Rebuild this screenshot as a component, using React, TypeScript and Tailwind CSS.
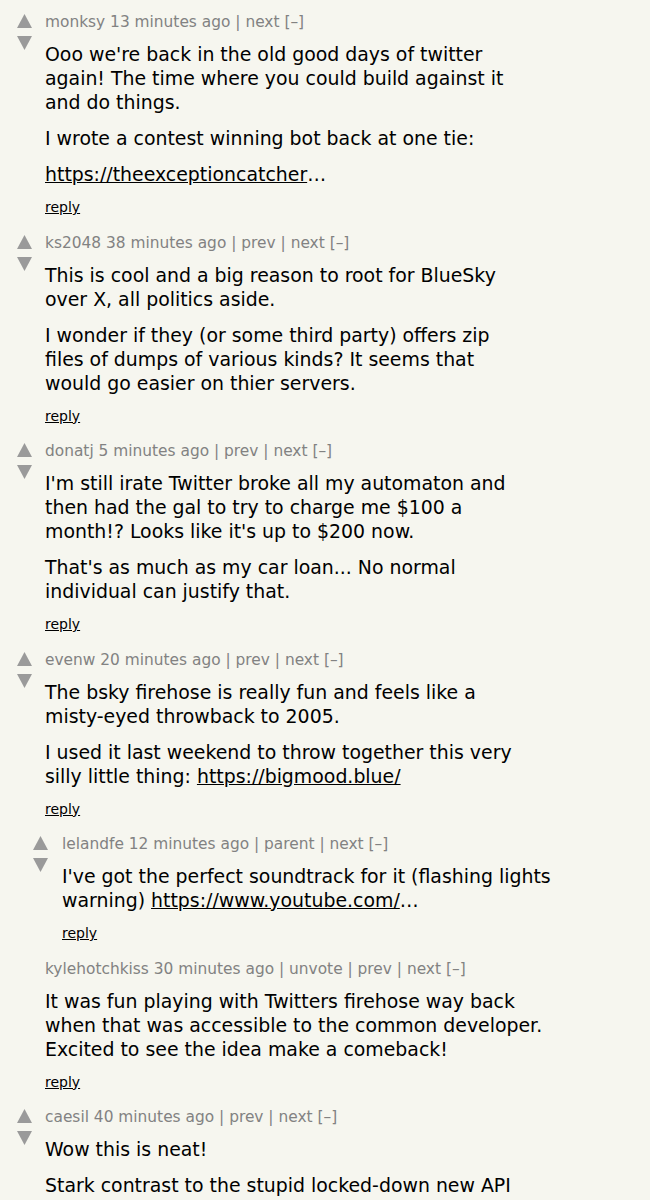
import React from "react";

type Part = string | { link: string; tail?: string };
type Line = Part[];
type Comment = {
  user: string;
  age: string;
  links: string[];
  arrows: boolean;
  nested?: boolean;
  paras: Line[][];
};

const comments: Comment[] = [
  {
    user: "monksy",
    age: "13 minutes ago",
    links: ["next"],
    arrows: true,
    paras: [
      [
        ["Ooo we're back in the old good days of twitter"],
        ["again! The time where you could build against it"],
        ["and do things."],
      ],
      [["I wrote a contest winning bot back at one tie:"]],
      [[{ link: "https://theexceptioncatcher", tail: "…" }]],
    ],
  },
  {
    user: "ks2048",
    age: "38 minutes ago",
    links: ["prev", "next"],
    arrows: true,
    paras: [
      [["This is cool and a big reason to root for BlueSky"], ["over X, all politics aside."]],
      [
        ["I wonder if they (or some third party) offers zip"],
        ["files of dumps of various kinds? It seems that"],
        ["would go easier on thier servers."],
      ],
    ],
  },
  {
    user: "donatj",
    age: "5 minutes ago",
    links: ["prev", "next"],
    arrows: true,
    paras: [
      [
        ["I'm still irate Twitter broke all my automaton and"],
        ["then had the gal to try to charge me $100 a"],
        ["month!? Looks like it's up to $200 now."],
      ],
      [["That's as much as my car loan... No normal"], ["individual can justify that."]],
    ],
  },
  {
    user: "evenw",
    age: "20 minutes ago",
    links: ["prev", "next"],
    arrows: true,
    paras: [
      [["The bsky firehose is really fun and feels like a"], ["misty-eyed throwback to 2005."]],
      [
        ["I used it last weekend to throw together this very"],
        ["silly little thing: ", { link: "https://bigmood.blue/" }],
      ],
    ],
  },
  {
    user: "lelandfe",
    age: "12 minutes ago",
    links: ["parent", "next"],
    arrows: true,
    nested: true,
    paras: [
      [
        ["I've got the perfect soundtrack for it (flashing lights"],
        ["warning) ", { link: "https://www.youtube.com/", tail: "…" }],
      ],
    ],
  },
  {
    user: "kylehotchkiss",
    age: "30 minutes ago",
    links: ["unvote", "prev", "next"],
    arrows: false,
    paras: [
      [
        ["It was fun playing with Twitters firehose way back"],
        ["when that was accessible to the common developer."],
        ["Excited to see the idea make a comeback!"],
      ],
    ],
  },
  {
    user: "caesil",
    age: "40 minutes ago",
    links: ["prev", "next"],
    arrows: true,
    paras: [
      [["Wow this is neat!"]],
      [["Stark contrast to the stupid locked-down new API"], ["that Twitter offers these days."]],
    ],
  },
];

const UpArrow = () => (
  <svg width="15" height="14" viewBox="0 0 15 14" className="block">
    <polygon points="7.5,0 15,14 0,14" fill="#9a9a9a" />
  </svg>
);
const DownArrow = () => (
  <svg width="15" height="14" viewBox="0 0 15 14" className="block">
    <polygon points="0,0 15,0 7.5,14" fill="#9a9a9a" />
  </svg>
);

function CommentView({ c }: { c: Comment }) {
  return (
    <div className={c.nested ? "flex pl-[33px] mb-[16.5px]" : "flex pl-[17px] mb-[16.5px]"}>
      <div className="w-[15px] shrink-0 flex flex-col pt-[2px] gap-[8px]">
        {c.arrows && (
          <>
            <UpArrow />
            <DownArrow />
          </>
        )}
      </div>
      <div className={c.nested ? "ml-[14px] flex-1 pr-[40px]" : "ml-[13px] flex-1 pr-[40px]"}>
        <div className="text-[15.4px] leading-[20px] text-[#828282]">
          {c.user} {c.age}
          {c.links.map((l) => (
            <span key={l}> | {l}</span>
          ))}{" "}
          [–]
        </div>
        <div className="mt-[10px] text-[18.9px] leading-[24px] text-black whitespace-nowrap">
          {c.paras.map((p, i) => (
            <p key={i} className={i > 0 ? "mt-[12px]" : ""}>
              {p.map((line, k) => (
                <React.Fragment key={k}>
                  {k > 0 && <br />}
                  {line.map((part, j) =>
                    typeof part === "string" ? (
                      <span key={j}>{part}</span>
                    ) : (
                      <span key={j}>
                        <span className="underline">{part.link}</span>
                        {part.tail}
                      </span>
                    )
                  )}
                </React.Fragment>
              ))}
            </p>
          ))}
        </div>
        <div className="mt-[12px] text-[14px] leading-[18px] text-black underline">reply</div>
      </div>
    </div>
  );
}

export default function App() {
  return (
    <div className="min-h-[1200px] bg-[#f6f6ef] pt-[12px] font-['DejaVu_Sans',Verdana,sans-serif] overflow-hidden">
      {comments.map((c) => (
        <CommentView key={c.user} c={c} />
      ))}
    </div>
  );
}
